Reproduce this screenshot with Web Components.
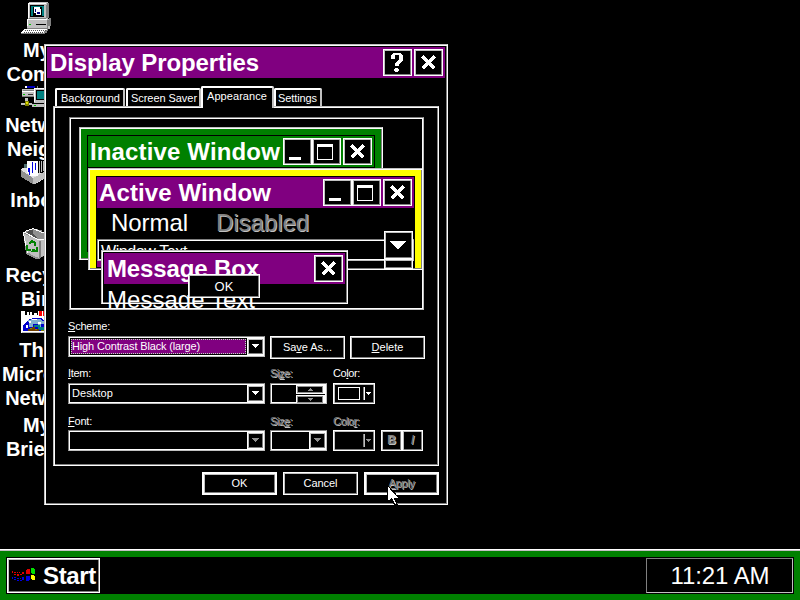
<!DOCTYPE html>
<html lang="en">
<head>
<meta charset="utf-8">
<title>Desktop</title>
<style>
html,body{margin:0;background:#000;color:#fff;width:800px;height:600px;overflow:hidden;font:11px/13px "Liberation Sans",Arial,sans-serif}
</style>
</head>
<body>
<desk-top></desk-top>
<script>
const bevels = `
:host{box-sizing:border-box;display:block}
*{box-sizing:border-box}
.win{border:1px solid;border-color:#c0c0c0 #fff #fff #c0c0c0;box-shadow:inset 1px 1px #fff,inset -1px -1px #808080}
.btn{border:1px solid #fff;box-shadow:inset 1px 1px #c0c0c0,inset -1px -1px #808080}
.field{border:1px solid;border-color:#808080 #c0c0c0 #c0c0c0 #808080;box-shadow:inset 0 0 0 1px #fff}
svg{display:block;shape-rendering:crispEdges}
`;
function define(name, css, html, setup) {
  customElements.define(name, class extends HTMLElement {
    constructor() {
      super();
      this.attachShadow({mode: 'open'}).innerHTML = `<style>${bevels}${css}</style>` + html;
    }
    connectedCallback() { if (setup) setup(this, this.shadowRoot); }
  });
}

/* Title-bar button: help, close, min, max */
const glyphs = {
  close: '<path fill="none" stroke="#fff" stroke-width="4" d="M8.500 7.500l12 12m0-12l-12 12"/>',
  min: '<path d="M6 19h12v3H6z"/>',
  max: '<path fill-rule="evenodd" d="M5 6h16v16H5zM6 9v12h14V9z"/>',
  help: '<path d="M10 4h8v1h1v1h1v6h-1v1h-1v1h-1v1h-1v2h-4v-3h1v-1h1v-1h1v-1h1V6h-4v4H8V6h1V5h1zM12 19h3v1h1v2h-1v1h-3v-1h-1v-2h1z"/>'
};
define('cap-button', ':host{width:29px;height:27px;flex:none}.btn{width:29px;height:27px;background:#000}svg{margin:-1px}',
  '<div class="btn"></div>',
  (el, r) => r.querySelector('.btn').innerHTML = `<svg width="29" height="27" fill="#fff">${glyphs[el.getAttribute('kind')]}</svg>`);

/* Caption bar with title and slotted buttons */
define('title-bar', `:host{display:flex;height:31px;background:var(--caption,#800080);padding:2px 2px 0 var(--pad,3px);font:bold 24px/27px "Liberation Sans",Arial,sans-serif}
.t{flex:1;white-space:nowrap}.b{display:flex}`, '<div class="t"><slot></slot></div><div class="b"><slot name="buttons"></slot></div>');

/* Framed window; --edge sets the thickness of the coloured sizing border */
define('hc-window', `.win{width:100%;height:100%;padding:var(--gap,2px);background:#000}
.edge{height:100%;padding:var(--edge,0px);padding-bottom:var(--edge-b,var(--edge,0px));background:var(--edge-color,#000)}
.in{height:100%;border:var(--line,0px) solid #000;background:#000}`,
  '<div class="win"><div class="edge"><div class="in"><slot></slot></div></div></div>');

define('push-button', `:host{width:75px;height:23px}.btn{height:100%;display:flex;justify-content:center;align-items:center;background:#000}
:host([thick]){background:#fff;padding:1px}`, '<div class="btn"><slot></slot></div>');

define('drop-arrow', `:host{width:15px;height:15px;border:1px solid #c0c0c0;border-right-color:#808080;border-bottom-color:#808080;background:#000;flex:none}
path{fill:#fff}:host([off]) path{fill:#909090}`,
  '<svg width="13" height="13"><path d="M3 4h7v1h-1v1h-1v1h-1v1h-1v-1h-1v-1h-1v-1h-1z"/></svg>');

define('combo-box', `:host{height:21px}.field{height:21px;padding:2px;display:flex;background:#000}
.v{flex:1;display:flex;align-items:center}
.a{width:17px;margin:-1px -2px -1px 0;padding:1px 0 0 1px;background:#fff;height:17px}`,
  '<div class="field"><div class="v"><slot></slot></div><div class="a"><drop-arrow></drop-arrow></div></div>',
  (el, r) => { if (el.hasAttribute('off')) r.querySelector('drop-arrow').setAttribute('off', ''); });

define('spin-box', `:host{height:21px}.field{height:21px;display:flex;justify-content:flex-end;padding:1px;background:#000}
.s{width:29px;display:flex;flex-direction:column;padding:1px 2px 1px 1px;background:linear-gradient(#fff 9px,#000 9px 10px,#fff 10px)}
i{display:block;height:7px;background:#000;border:1px solid #909090}i+i{margin-top:3px}`,
  `<div class="field"><div class="s"><i><svg width="24" height="5" fill="#909090"><path d="M12 1h1v1h1v1h1v1h-5V3h1V2h1z"/></svg></i><i><svg width="24" height="5" fill="#909090"><path d="M10 1h5v1h-1v1h-1v1h-1V3h-1V2h-1z"/></svg></i></div></div>`);

define('color-box', `:host{height:21px;width:42px}.btn{height:21px;display:flex;align-items:center;padding-left:4px}
.w{width:22px;height:13px;border:1px solid #fff}:host([off]) .w{border-color:transparent}
.s{width:2px;height:13px;margin-left:3px;border-left:1px solid #808080;border-right:1px solid #fff}
svg{margin-left:1px}path{fill:#fff}:host([off]) path{fill:#909090}:host([off]) .s{border-right-color:#c0c0c0}`,
  '<div class="btn"><div class="w"></div><div class="s"></div><svg width="6" height="4"><path d="M0 0h5v1h-1v1h-1v1h-1v-1h-1v-1h-1z"/></svg></div>');

define('tab-item', `:host{height:18px;flex:none}
.t{height:100%;background:#000;border:solid;border-width:2px 2px 0;border-color:#fff #c0c0c0 #000 #fff;border-radius:2px 2px 0 0;padding:2px 0 0 var(--pad,3px);white-space:nowrap;position:relative}
:host([active]){height:22px;margin-bottom:-2px;z-index:1}`, '<div class="t"><slot></slot></div>');

/* Preview of the selected scheme: sample windows lying over each other */
define('scheme-preview', `:host{width:355px;height:193px}
.field{height:100%;position:relative;overflow:hidden}
.clip{position:absolute;inset:1px;overflow:hidden}
hc-window,.ok,.msg{position:absolute}
.inactive{left:8px;top:8px;width:304px;height:133px;--gap:1px;--edge:6px;--edge-color:#008000;--line:1px}
.active{left:17px;top:49px;width:335px;height:102px;--gap:1px;--edge:6px;--edge-b:0px;--edge-color:#ff0;--line:1px}
.message{left:30px;top:131px;width:247px;height:54px}
.menu{display:flex;font-size:24px;line-height:29px;height:31px;padding-left:14px;gap:28px}
.dis{color:#808080;text-shadow:1px 1px #c0c0c0}
.text{height:22px;font-size:16px;line-height:18px;padding:3px 0 0 3px;overflow:hidden;background:#000}
.strip{width:6px;height:6px;background:#800080}
.scroll{position:absolute;left:313px;top:112px;width:29px}
.scroll div{background:#000}.scroll div+div{height:10px}
.msg{left:36px;top:167px;font-size:24px;line-height:27px}
.ok{left:117px;top:155px;width:72px;height:24px;font-size:13px}`,
`<div class="field"><div class="clip">
<hc-window class="inactive"><title-bar style="--caption:#008000;--pad:2px"><ui-text w="190">Inactive Window</ui-text>
<cap-button slot="buttons" kind="min"></cap-button><cap-button slot="buttons" kind="max"></cap-button><cap-button slot="buttons" kind="close" style="margin-left:2px"></cap-button></title-bar></hc-window>
<hc-window class="active"><title-bar style="--pad:2px"><ui-text w="172">Active Window</ui-text>
<cap-button slot="buttons" kind="min"></cap-button><cap-button slot="buttons" kind="max"></cap-button><cap-button slot="buttons" kind="close" style="margin-left:2px"></cap-button></title-bar>
<div class="menu"><ui-text w="77">Normal</ui-text><ui-text class="dis" w="93">Disabled</ui-text></div>
<div class="text field"><ui-text w="86">Window Text</ui-text></div><div class="strip"></div></hc-window>
<div class="scroll"><div class="btn" style="height:28px"><svg width="27" height="25"><path d="M5 9h16v1h-1v1h-1v1h-1v1h-1v1h-1v1h-1v1h-1v1h-2v-1h-1v-1h-1v-1H9v-1H8v-1H7v-1H6v-1H5z" fill="#fff"/></svg></div><div class="btn"></div></div>
<hc-window class="message"><title-bar><ui-text w="152">Message Box</ui-text><cap-button slot="buttons" kind="close"></cap-button></title-bar></hc-window>
<div class="msg"><ui-text w="148">Message Text</ui-text></div>
<push-button class="ok"><ui-text w="19">OK</ui-text></push-button>
</div></div>`);

define('display-dialog', `
.tabs{display:flex;align-items:flex-end;height:28px;padding-left:8px}
.panel{margin:0 6px;height:360px;padding:9px 14px 0;width:386px}
.form{margin-top:10px}
.row{display:flex;height:47px}
.cell{display:flex;flex-direction:column;flex:none}
label{height:16px;display:block;white-space:nowrap}
.pb{padding-top:16px}
.off{color:#808080;text-shadow:1px 1px #c0c0c0}
.sel{background:#800080;outline:1px dotted #c0e0c0;outline-offset:-1px;width:175px;height:15px;padding:1px 0 0 1px;white-space:nowrap}
.bi{width:21px;height:21px;margin-top:16px;display:flex;align-items:center;justify-content:center;font-size:12px}
.bot{display:flex;justify-content:flex-end;gap:6px;padding:6px 6px 0}
`, `<hc-window style="width:404px;height:461px">
<title-bar><ui-text w="209">Display Properties</ui-text><cap-button slot="buttons" kind="help"></cap-button><cap-button slot="buttons" kind="close" style="margin-left:2px"></cap-button></title-bar>
<div class="tabs"><tab-item style="width:70px;margin-right:1px;--pad:4px"><ui-text w="59">Background</ui-text></tab-item><tab-item style="width:75px"><ui-text w="66">Screen Saver</ui-text></tab-item><tab-item active style="width:73px;--pad:4px"><ui-text w="60">Appearance</ui-text></tab-item><tab-item style="width:48px;--pad:2px"><ui-text w="39">Settings</ui-text></tab-item></div>
<div class="panel win"><scheme-preview style="margin:1px"></scheme-preview>
<div class="form">
<div class="row"><div class="cell" style="width:197px"><label><ui-text w="42"><u>S</u>cheme:</ui-text></label><combo-box><div class="sel"><ui-text w="128">High Contrast Black (large)</ui-text></div></combo-box></div>
<div class="pb" style="margin-left:5px"><push-button><ui-text w="49">Sa<u>v</u>e As...</ui-text></push-button></div><div class="pb" style="margin-left:5px"><push-button><ui-text w="32"><u>D</u>elete</ui-text></push-button></div></div>
<div class="row"><div class="cell" style="width:197px"><label><ui-text w="23"><u>I</u>tem:</ui-text></label><combo-box><ui-text w="41" style="margin-left:1px">Desktop</ui-text></combo-box></div>
<div class="cell" style="width:57px;margin-left:5px"><label class="off"><ui-text w="22">Si<u>z</u>e:</ui-text></label><spin-box></spin-box></div>
<div class="cell" style="width:42px;margin-left:6px"><label><ui-text w="27">Co<u>l</u>or:</ui-text></label><color-box></color-box></div></div>
<div class="row"><div class="cell" style="width:197px"><label style="padding-top:1px"><ui-text w="24"><u>F</u>ont:</ui-text></label><combo-box off></combo-box></div>
<div class="cell" style="width:57px;margin-left:5px"><label class="off" style="padding-top:1px"><ui-text w="22">Siz<u>e</u>:</ui-text></label><combo-box off></combo-box></div>
<div class="cell" style="width:42px;margin-left:6px"><label class="off" style="padding-top:1px"><ui-text w="26">Colo<u>r</u>:</ui-text></label><color-box off></color-box></div>
<div class="bi btn off" style="margin-left:6px"><b>B</b></div><div class="bi btn off"><i>I</i></div></div>
</div></div>
<div class="bot"><push-button thick><ui-text w="16">OK</ui-text></push-button><push-button><ui-text w="34">Cancel</ui-text></push-button><push-button thick><ui-text class="off" w="26"><u>A</u>pply</ui-text></push-button></div>
</hc-window>`);

define('task-bar', `:host{height:51px;background:#008000;border-top:1px solid #fff;box-shadow:inset 0 1px #c0c0c0;padding:7px 6px 6px}
.in{height:37px;background:#000;display:flex;justify-content:space-between;padding:1px;font-size:24px;line-height:33px}
.start{width:93px;height:35px;display:flex;font-weight:bold;padding:0 0 0 3px}
.start svg{margin:9px 6px 0 0}
.clock{width:147px;height:35px;border:1px solid;border-color:#808080 #c0c0c0 #c0c0c0 #808080;text-align:center;padding-left:1px}`,
`<div class="in"><div class="start btn"><svg width="26" height="14">
<path fill="#e00000" d="M1 3h1v2h-1zM3 4h2v1h-2zM3 6h2v1h-2zM6 6h2v2h-2zM9 6h2v1h-2zM8 4h1v1h-1zM11 4h2v2h-2zM6 4h1v1h-1zM16 1h3v5h-4V2h1z"/>
<path fill="#0000e0" d="M1 9h1v2h-1zM3 11h2v1h-2zM3 9h2v1h-2zM6 12h2v1h-2zM6 10h2v1h-2zM9 12h2v1h-2zM9 10h1v1h-1zM11 9h2v3h-2zM15 8h4v4h-1v1h-3z"/>
<path fill="#00e000" d="M20 0h3v1h1v5h-3V5h-1z"/><path fill="#ff0" d="M20 7h3v1h1v4h-3v-1h-1z"/></svg><ui-text w="53">Start</ui-text></div>
<div class="clock"><ui-text w="99">11:21 AM</ui-text></div></div>`);

/* Desktop shortcut: picture with a label of one or more centred lines */
const pictures = {
  pc: `<g transform="scale(1 1.065) translate(0 -2)"><path fill="#c0c0c0" d="M7 3h1V2h19v16H7z"/><path fill="#fff" d="M7 3h18v1H8v13H7z"/><path fill="#808080" d="M26 3h2v14h-3V5h1zM8 17h17v1H8z"/><path fill="#000" d="M9 5h14v11H9z"/><path fill="#008080" d="M10 6h13v9H10z"/><path fill="#000" d="M12 7h9v8h-9z"/><path fill="#fff" d="M13 7h6v5h-6zM15 9h5v5h-5z"/><path fill="#000080" d="M14 9h1v2h-1zM16 11h3v2h-3z"/>
  <path fill="#c0c0c0" d="M6 18h23v9H6z"/><path fill="#fff" d="M6 18h20v1H7v6H6z"/><path fill="#808080" d="M28 17h2v8h-3v2H6v-1h20v-7h2z"/><path fill="#00c000" d="M8 23h2v1H8z"/><path fill="#000" d="M15 23h10v1H15z"/><path fill="#fff" d="M3 27h24v1h-1v1h-1v1h-1v1H0v-1h1v-1h1v-1h1z"/><path stroke="#505050" stroke-dasharray="1 1" d="M4 28.500h21M3 30.500h21"/><path fill="#808080" d="M26 27h1v2h-1v2h-2v1H0v-1h23v-2h2v-1h1z"/></g>`,
  net: `<path fill="#c0c0c0" d="M4 7h12v2H4zM1 12h24v8H1z"/><path fill="#0000c0" d="M6 9h8v2H6z"/><path fill="#fff" d="M4 9h2v2H4zM1 14h19v1H1z"/><path fill="#808080" d="M16 9h1v2h-1zM2 13h14v1H2zM1 19h13v1H1z"/><path fill="#00c000" d="M2 17h2v1H2z"/><path fill="#303030" d="M7 17h5v1H7z"/><path fill="#c0c0c0" d="M4 21h3v4H4zM0 26h11v2H0z"/><path fill="#808000" d="M4 24h4v5H4z"/><path fill="#e0e000" d="M5 25h2v2H5z"/><path fill="#c0c0c0" d="M13 11h12v15H13zM11 27h14v3H11z"/><path fill="#fff" d="M13 11h12v1H14v13h-1z"/><path fill="#000" d="M15 13h10v10H15z"/><path fill="#008080" d="M16 14h9v8h-9z"/><path fill="#000" d="M11 26h14v1H11z"/><path fill="#00c000" d="M13 28h2v1h-2z"/>`,
  inbox: `<path fill="#e0e0e0" d="M1 16h5l5 5h10l4-4v9l-9 5H12L0 25v-8z"/><path fill="#909090" d="M0 18l12 8v6L0 25z"/><path fill="#c0c0c0" d="M12 26l13-7v6l-11 7h-2z"/><path fill="#fff" d="M6 9h11v15H9l-3-3z"/><path stroke="#0000e0" d="M7.500 20v-4M8.500 23v-7M11.500 21V10M14.500 18v-7"/><path stroke="#c0c0c0" d="M18.500 9v12M20.500 9v11M22.500 9v10M24.500 9v9"/><path fill="#507070" d="M3 12h3v4H3z"/>`,
  bin: `<path fill="#909090" d="M2 5h3V3h4V2h3V1h1v1h4v1h4v3l2 1v16l-1 7h-3v2h-4L5 27z"/><path fill="#c0c0c0" d="M2 6l15 7h8v14l-6 4-4-1-9-5z"/><path fill="#505050" d="M9 3h3v4l6 4h-4L5 6z"/><path fill="#909090" d="M12 2l12 5v3l-6 2-6-5z"/><path fill="none" stroke="#fff" d="M2 5.500h2L17 12.500h8M4 4.500l8-3 12 5M2.500 6l4 20"/><path fill="#808080" d="M18 14h2v17h-2z"/><path fill="none" stroke="#008000" stroke-width="2" d="M8 17l3-3 3 2M6 18v5h4M12 24h4v-4M14 15v4M13 22l-2 3"/>`,
  msn: `<path fill="#fff" d="M0 8h25v23H0z"/><path fill="#000" d="M4 9h13v4h-1v-2h-3v2h-2v-3h-2v3H8v-3H6v3H4z"/><path fill="#f00" d="M18 9h3v5h-3zM22 9h1v5h-1z"/><path fill="#c0c0c0" d="M1 30h24v1H1z"/><path fill="#00c" d="M2 29v-5l2-3 3-3 5-2h8l5 3v10z"/><path fill="#80b0d0" d="M7 18h3v-1h9l3 2h3v3h-5v3h-3v-3h-5v3H8v-3z"/><path fill="#fff" d="M8 19h2v2H8zM11 17h5v1h-5zM17 20h3v2h-3zM5 23h2v3H5z"/><path fill="#008080" d="M13 23h6v2h6v3h-8v-3h-4z"/><path fill="#704000" d="M7 27h4v-2h3v2h4v2H7z"/><path fill="#808000" d="M9 26h2v1H9zM14 27h2v1h-2zM20 28h4v1h-4z"/>`,
  none: ''
};
define('desk-icon', `:host{width:74px;position:absolute;left:0}
svg{margin-left:21px;height:36px}
.l{background:#000;text-align:center;font:bold 20px/24px "Liberation Sans",Arial,sans-serif;white-space:pre-line}`,
  '<div class="p"></div><div class="l"><slot></slot></div>',
  (el, r) => r.querySelector('.p').innerHTML = `<svg width="32" height="36" viewBox="0 0 32 36">${pictures[el.getAttribute('kind')]}</svg>`);

define('desk-top', `:host{width:800px;height:600px;position:relative;background:#000;display:flex;flex-direction:column;justify-content:flex-end;overflow:hidden}
display-dialog{position:absolute;left:44px;top:44px;z-index:20}.cur{position:absolute;left:387px;top:485px;z-index:30}`,
`<desk-icon kind="pc" style="top:2px;z-index:6">My<br>Com...</desk-icon>
<desk-icon kind="net" style="top:77px;z-index:5">Netw...<br>Neig...</desk-icon>
<desk-icon kind="inbox" style="top:152px;z-index:4">Inbox</desk-icon>
<desk-icon kind="bin" style="top:227px;z-index:3">Recy...<br>Bin</desk-icon>
<desk-icon kind="msn" style="top:302px;z-index:2">The<br>Micro...<br>Netw...</desk-icon>
<desk-icon kind="none" style="top:377px;z-index:1">My<br>Brief...</desk-icon>
<display-dialog></display-dialog>
<svg class="cur" width="13" height="20"><path fill="#fff" stroke="#000" d="M.5.500v16.500l4-3.500 3 6h2.500l-3-6.500h5z"/></svg>
<task-bar></task-bar>`);

/* Run of text spaced out to the width given by w */
define('ui-text', ':host{display:inline-block;white-space:pre;flex:none}', '<slot></slot>', el => {
  const w = +el.getAttribute('w');
  if (!w) return;
  const now = el.getBoundingClientRect().width;
  el.style.letterSpacing = (w - now) / el.textContent.length + 'px';
});
</script>
</body>
</html>
